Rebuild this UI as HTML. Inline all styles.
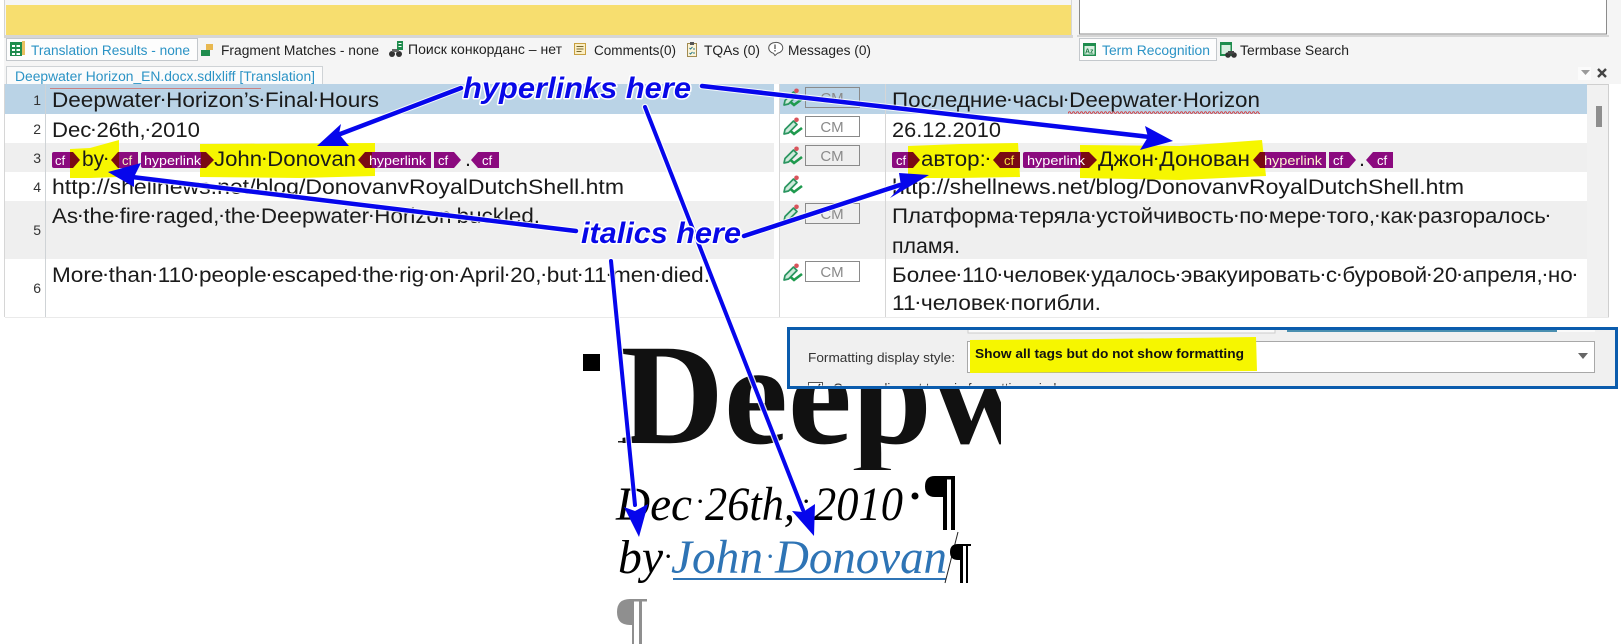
<!DOCTYPE html>
<html><head><meta charset="utf-8"><title>Deepwater Horizon</title>
<style>
html,body{margin:0;padding:0;background:#fff;width:1621px;height:644px;overflow:hidden}
svg{display:block}
text{font-family:"Liberation Sans",sans-serif;white-space:pre}
.seg{font-size:21.5px;fill:#1a1a1a}
.d{font-size:15px;baseline-shift:2.200px;font-weight:bold}
.num{font-size:14px;fill:#333;text-anchor:end}
.tab{font-size:13.5px;fill:#222}
.tabb{font-size:13.5px;fill:#2b93c5}
.tg{font-size:13px;fill:#fff}
.cm{font-size:15px;fill:#8a8a8a;text-anchor:middle}
.ann{font-size:30px;font-weight:bold;font-style:italic;fill:#0808e8;stroke:#fff;stroke-width:3px;paint-order:stroke;stroke-linejoin:round}
.ser{font-family:"Liberation Serif",serif}
.it{font-size:48px;font-style:italic;fill:#000}
.bl{fill:#2e74b5}
</style></head><body>
<svg width="1621" height="644" viewBox="0 0 1621 644" xmlns="http://www.w3.org/2000/svg">
<defs>
<pattern id="wv" width="4" height="3" patternUnits="userSpaceOnUse" x="0" y="111"><path d="M0 2.5L1 .8L2 .8L3 2.5L4 2.5" fill="none" stroke="#d83030" stroke-width=".8"/></pattern>
<g id="pen">
<path d="M2 12.500L10.500 4L14 7.500L5.500 16L1 17Z" fill="#cfeadb" stroke="#2a9560" stroke-width="1.700" stroke-linejoin="round"/>
<circle cx="13.500" cy="2.800" r="2.300" fill="#d9535b"/>
<path d="M7.500 14L11 17L19 11" fill="none" stroke="#1f9a4e" stroke-width="2.600"/>
</g>
<clipPath id="hc"><rect x="600" y="320" width="401" height="150"/></clipPath>
<clipPath id="pc"><rect x="790" y="330" width="825" height="55.5"/></clipPath>
</defs>

<!-- top area -->
<rect x="0" y="0" width="1621" height="84" fill="#f5f5f5"/>
<rect x="0" y="0" width="4" height="320" fill="#fff"/>
<rect x="4" y="0" width="1" height="36" fill="#d4d4d4"/>
<rect x="6" y="5" width="1065" height="30" fill="#f7de6f"/>
<rect x="4" y="35" width="1069" height="3" fill="#d6d6d6"/>
<rect x="1071" y="0" width="1" height="38" fill="#d6d6d6"/>
<rect x="1079.5" y="-2" width="527" height="36" fill="#fff" stroke="#8c8c8c"/>
<rect x="1077" y="35" width="532" height="2" fill="#d6d6d6"/>

<!-- left tabs -->
<rect x="6.500" y="38.500" width="191" height="22" fill="#fdfdfd" stroke="#c4c8cc"/>
<g><rect x="10" y="42" width="12" height="14" fill="#1e8c4d"/><rect x="12" y="45" width="8" height="2" fill="#fff"/><rect x="12" y="49" width="8" height="2" fill="#fff"/><rect x="12" y="53" width="8" height="2" fill="#fff"/><rect x="15" y="44" width="1.500" height="11" fill="#1e8c4d"/><rect x="22" y="41" width="3" height="14" fill="#e8c060"/></g>
<text class="tabb" x="31" y="55" textLength="159" lengthAdjust="spacingAndGlyphs">Translation Results - none</text>
<rect x="201" y="50" width="9" height="6" fill="#1e8c4d"/><rect x="206" y="44" width="7" height="6" fill="#e8b850"/>
<text class="tab" x="221" y="55" textLength="158" lengthAdjust="spacingAndGlyphs">Fragment Matches - none</text>
<g><circle cx="392" cy="54" r="3" fill="#333"/><circle cx="399" cy="54" r="3" fill="#333"/><rect x="392" y="49" width="7" height="3" fill="#666"/><rect x="397" y="41" width="6" height="9" fill="#1e8c4d"/><rect x="398.500" y="43" width="3" height="1" fill="#fff"/><rect x="398.500" y="46" width="3" height="1" fill="#fff"/></g>
<text class="tab" x="408" y="54" textLength="154" lengthAdjust="spacingAndGlyphs">Поиск конкорданс – нет</text>
<g fill="none"><rect x="574.500" y="43.500" width="11" height="11" fill="#fbeec4" stroke="#c8a040"/><path d="M576.500 46.500h7M576.500 49h7M576.500 51.500h5" stroke="#7a6a30"/></g>
<text class="tab" x="594" y="55" textLength="82" lengthAdjust="spacingAndGlyphs">Comments(0)</text>
<g fill="none"><rect x="687.500" y="43.500" width="9" height="13" fill="#fbf3d8" stroke="#a08a50"/><rect x="690" y="42" width="4" height="3" fill="#555"/><path d="M689.500 48l1 1 2-2M689.500 53l1 1 2-2M693 49h2M693 53h2" stroke="#2a7a8a"/></g>
<text class="tab" x="704" y="55" textLength="56" lengthAdjust="spacingAndGlyphs">TQAs (0)</text>
<g fill="none" stroke="#555"><path d="M775 42.500a6.500 5.500 0 0 1 2.500 10.800L775 55.500L773.500 53.300a6.500 5.500 0 0 1 1.500-10.800Z" fill="#fff"/><path d="M775 44.500v4.500M775 50v1.500" stroke-width="1.300"/></g>
<text class="tab" x="788" y="55" textLength="83" lengthAdjust="spacingAndGlyphs">Messages (0)</text>

<!-- right tabs -->
<rect x="1079.500" y="38.500" width="137" height="22" fill="#fdfdfd" stroke="#c4c8cc"/>
<rect x="1083" y="43" width="13" height="13" fill="#1e8c4d"/><rect x="1084.500" y="46" width="10" height="8.500" fill="#d8eee0"/><text x="1085" y="53.500" font-size="7" font-weight="bold" fill="#1e7c45">Az</text>
<text class="tabb" x="1102" y="55" textLength="108" lengthAdjust="spacingAndGlyphs">Term Recognition</text>
<rect x="1220" y="42" width="12" height="14" fill="#1e8c4d"/><rect x="1221.500" y="45" width="9" height="9" fill="#d8eee0"/><circle cx="1228" cy="55" r="2.800" fill="#333"/><circle cx="1234" cy="55" r="2.800" fill="#333"/><rect x="1228" y="51" width="6" height="3" fill="#444"/>
<text class="tab" x="1240" y="55" textLength="109" lengthAdjust="spacingAndGlyphs">Termbase Search</text>

<!-- doc tab -->
<rect x="6.500" y="66.500" width="316" height="20" fill="#fbfbfb" stroke="#cfd3d6"/>
<text class="tabb" x="15" y="81" textLength="300" lengthAdjust="spacingAndGlyphs">Deepwater Horizon_EN.docx.sdlxliff [Translation]</text>
<!-- menu -->
<rect x="1578" y="67" width="13" height="13" fill="#fbfbfb"/>
<path d="M1581 70h9l-4.500 5z" fill="#9a9a9a"/>
<path d="M1598 69l8 8M1606 69l-8 8" stroke="#444" stroke-width="2.400"/>

<!-- table -->
<rect x="5" y="84" width="1603" height="233" fill="#fff"/>
<rect x="5" y="84" width="769" height="30" fill="#bad3e6"/>
<rect x="779" y="84" width="808" height="30" fill="#bad3e6"/>
<rect x="5" y="143" width="769" height="29" fill="#efefef"/><rect x="779" y="143" width="808" height="29" fill="#efefef"/>
<rect x="5" y="201" width="769" height="58" fill="#efefef"/><rect x="779" y="201" width="808" height="58" fill="#efefef"/>
<rect x="45" y="84" width="1" height="233" fill="#cfd3d6"/>
<rect x="779" y="84" width="1" height="233" fill="#d6d6d6"/>
<rect x="885" y="84" width="1" height="233" fill="#d6d6d6"/>
<rect x="4" y="84" width="1" height="233" fill="#d6d6d6"/>
<rect x="1587" y="84" width="21" height="233" fill="#f1f1f1"/>
<rect x="1608" y="84" width="1" height="233" fill="#cfcfcf"/>
<rect x="1587" y="84" width="22" height="1" fill="#cfcfcf"/>
<rect x="1596" y="106" width="6" height="21" fill="#8e8e8e"/>
<rect x="5" y="317" width="1604" height="1" fill="#eaeaea"/>
<rect x="50" y="88" width="211" height="1" fill="#c98080"/>

<text class="num" x="41" y="105">1</text>
<text class="num" x="41" y="134">2</text>
<text class="num" x="41" y="163">3</text>
<text class="num" x="41" y="192">4</text>
<text class="num" x="41" y="235">5</text>
<text class="num" x="41" y="293">6</text>

<!-- yellow highlights -->
<path d="M70 149L90 148L119 140L119 177L90 178L70 178Z" fill="#f6f600"/>
<path d="M200 144L375 143L375 176L300 178L200 177Z" fill="#f6f600"/>
<path d="M908 146L960 144L1018 143L1020 177L960 178L908 178Z" fill="#f6f600"/>
<path d="M1080 145L1180 146L1262 140L1266 176L1180 180L1080 178Z" fill="#f6f600"/>

<!-- source text -->
<text class="seg" x="52" y="107" textLength="327" lengthAdjust="spacingAndGlyphs">Deepwater<tspan class="d">·</tspan>Horizon’s<tspan class="d">·</tspan>Final<tspan class="d">·</tspan>Hours</text>
<text class="seg" x="52" y="137" textLength="148" lengthAdjust="spacingAndGlyphs">Dec<tspan class="d">·</tspan>26th,<tspan class="d">·</tspan>2010</text>
<text class="seg" x="82" y="166" textLength="27" lengthAdjust="spacingAndGlyphs">by<tspan class="d">·</tspan></text>
<text class="seg" x="214" y="166" textLength="142" lengthAdjust="spacingAndGlyphs">John<tspan class="d">·</tspan>Donovan</text>
<text class="seg" x="465" y="166">.</text>
<text class="seg" x="52" y="194" textLength="572" lengthAdjust="spacingAndGlyphs">http://shellnews.net/blog/DonovanvRoyalDutchShell.htm</text>
<text class="seg" x="52" y="223" textLength="488" lengthAdjust="spacingAndGlyphs">As<tspan class="d">·</tspan>the<tspan class="d">·</tspan>fire<tspan class="d">·</tspan>raged,<tspan class="d">·</tspan>the<tspan class="d">·</tspan>Deepwater<tspan class="d">·</tspan>Horizon<tspan class="d">·</tspan>buckled.</text>
<text class="seg" x="52" y="282" textLength="658" lengthAdjust="spacingAndGlyphs">More<tspan class="d">·</tspan>than<tspan class="d">·</tspan>110<tspan class="d">·</tspan>people<tspan class="d">·</tspan>escaped<tspan class="d">·</tspan>the<tspan class="d">·</tspan>rig<tspan class="d">·</tspan>on<tspan class="d">·</tspan>April<tspan class="d">·</tspan>20,<tspan class="d">·</tspan>but<tspan class="d">·</tspan>11<tspan class="d">·</tspan>men<tspan class="d">·</tspan>died.</text>

<!-- source tags -->
<path d="M54 152H70V168H54Q52 168 52 166V154Q52 152 54 152Z" fill="#8b0a7f"/><path d="M70 152H73L80 160L73 168H70Z" fill="#7a0a14"/><text class="tg" x="55" y="165">cf</text>
<path d="M111 160L118 152H121V168H118Z" fill="#7a0a14"/><path d="M119 152H138V168H119Z" fill="#8b0a7f"/><text class="tg" x="122" y="165" style="fill:#f4f0c0">cf</text>
<path d="M143 152H203V168H143Q141 168 141 166V154Q141 152 143 152Z" fill="#8b0a7f"/><path d="M201 152H206L214 160L206 168H201Z" fill="#7a0a14"/><text class="tg" x="144" y="165" textLength="57" lengthAdjust="spacingAndGlyphs">hyperlink</text>
<path d="M358 160L365 152H372V168H365Z" fill="#7a0a14"/><path d="M372 152H431V168H372Z" fill="#8b0a7f"/><text class="tg" x="369" y="165" textLength="57" lengthAdjust="spacingAndGlyphs">hyperlink</text>
<path d="M434 152H454L461 160L454 168H434Z" fill="#8b0a7f"/><text class="tg" x="438" y="165">cf</text>
<path d="M471 160L478 152H499V168H478Z" fill="#8b0a7f"/><text class="tg" x="482" y="165">cf</text>

<!-- status column -->
<use href="#pen" x="783" y="88"/><use href="#pen" x="783" y="117"/><use href="#pen" x="783" y="146"/><use href="#pen" x="783" y="175"/><use href="#pen" x="783" y="204"/><use href="#pen" x="783" y="263"/>
<rect x="805.500" y="87.500" width="54" height="20" fill="#bad3e6" stroke="#8a8a8a"/><text class="cm" x="832" y="103">CM</text>
<rect x="805.500" y="116.500" width="54" height="20" fill="#fff" stroke="#8a8a8a"/><text class="cm" x="832" y="132">CM</text>
<rect x="805.500" y="145.500" width="54" height="20" fill="#efefef" stroke="#8a8a8a"/><text class="cm" x="832" y="161">CM</text>
<rect x="805.500" y="203.500" width="54" height="20" fill="#efefef" stroke="#8a8a8a"/><text class="cm" x="832" y="219">CM</text>
<rect x="805.500" y="261.500" width="54" height="20" fill="#fff" stroke="#8a8a8a"/><text class="cm" x="832" y="277">CM</text>

<!-- target text -->
<rect x="1068" y="111" width="192" height="3" fill="url(#wv)"/>
<text class="seg" x="892" y="107" textLength="368" lengthAdjust="spacingAndGlyphs">Последние<tspan class="d">·</tspan>часы<tspan class="d">·</tspan>Deepwater<tspan class="d">·</tspan>Horizon</text>
<text class="seg" x="892" y="137" textLength="109" lengthAdjust="spacingAndGlyphs">26.12.2010</text>
<text class="seg" x="921" y="166" textLength="70" lengthAdjust="spacingAndGlyphs">автор:<tspan class="d">·</tspan></text>
<text class="seg" x="1098" y="166" textLength="152" lengthAdjust="spacingAndGlyphs">Джон<tspan class="d">·</tspan>Донован</text>
<text class="seg" x="1359" y="166">.</text>
<text class="seg" x="892" y="194" textLength="572" lengthAdjust="spacingAndGlyphs">http://shellnews.net/blog/DonovanvRoyalDutchShell.htm</text>
<text class="seg" x="892" y="223" textLength="659" lengthAdjust="spacingAndGlyphs">Платформа<tspan class="d">·</tspan>теряла<tspan class="d">·</tspan>устойчивость<tspan class="d">·</tspan>по<tspan class="d">·</tspan>мере<tspan class="d">·</tspan>того,<tspan class="d">·</tspan>как<tspan class="d">·</tspan>разгоралось<tspan class="d">·</tspan></text>
<text class="seg" x="892" y="253" textLength="68" lengthAdjust="spacingAndGlyphs">пламя.</text>
<text class="seg" x="892" y="282" textLength="686" lengthAdjust="spacingAndGlyphs">Более<tspan class="d">·</tspan>110<tspan class="d">·</tspan>человек<tspan class="d">·</tspan>удалось<tspan class="d">·</tspan>эвакуировать<tspan class="d">·</tspan>с<tspan class="d">·</tspan>буровой<tspan class="d">·</tspan>20<tspan class="d">·</tspan>апреля,<tspan class="d">·</tspan>но<tspan class="d">·</tspan></text>
<text class="seg" x="892" y="310" textLength="209" lengthAdjust="spacingAndGlyphs">11<tspan class="d">·</tspan>человек<tspan class="d">·</tspan>погибли.</text>

<!-- target tags -->
<path d="M894 152H908V168H894Q892 168 892 166V154Q892 152 894 152Z" fill="#8b0a7f"/><path d="M908 152H913L920 160L913 168H908Z" fill="#7a0a14"/><text class="tg" x="896" y="165">cf</text>
<path d="M993 160L1000 152H1020V168H1000Z" fill="#7a0a14"/><text class="tg" x="1004" y="165" style="fill:#f5e040">cf</text>
<path d="M1025 152H1082V168H1025Q1023 168 1023 166V154Q1023 152 1025 152Z" fill="#8b0a7f"/><path d="M1081 152H1089L1097 160L1089 168H1081Z" fill="#7a0a14"/><text class="tg" x="1027" y="165" textLength="58" lengthAdjust="spacingAndGlyphs">hyperlink</text>
<path d="M1253 160L1260 152H1266V168H1260Z" fill="#7a0a14"/><path d="M1265 152H1326V168H1265Z" fill="#8b0a7f"/><text class="tg" x="1264" y="165" textLength="58" lengthAdjust="spacingAndGlyphs" style="fill:#fdf6d0">hyperlink</text>
<path d="M1329 152H1349L1356 160L1349 168H1329Z" fill="#8b0a7f"/><text class="tg" x="1333" y="165">cf</text>
<path d="M1366 160L1373 152H1393V168H1373Z" fill="#8b0a7f"/><text class="tg" x="1377" y="165">cf</text>

<!-- document preview -->
<rect x="583" y="354" width="17" height="17" fill="#000"/>
<rect x="618" y="441" width="8" height="1.500" fill="#222"/>
<g clip-path="url(#hc)"><text class="ser" x="620" y="443" font-size="144" font-weight="bold" fill="#111">Deepw</text></g>
<text class="ser it" x="616" y="520" textLength="76" lengthAdjust="spacingAndGlyphs">Dec</text>
<text class="ser it" x="696" y="511" style="font-size:30px">·</text>
<text class="ser it" x="705" y="520" textLength="90" lengthAdjust="spacingAndGlyphs">26th,</text>
<text class="ser it" x="802" y="511" style="font-size:30px">·</text>
<text class="ser it" x="814" y="520" textLength="89" lengthAdjust="spacingAndGlyphs">2010</text>
<circle cx="915" cy="496" r="3.500" fill="#000"/>
<path d="M935 476H955V530H951V479.500H947V530H943V497H935Q925 497 925 486.500Q925 476 935 476Z" fill="#000"/>
<text class="ser it" x="618" y="573" textLength="45" lengthAdjust="spacingAndGlyphs">by</text>
<text class="ser it" x="664" y="566" style="font-size:30px">·</text>
<text class="ser it bl" x="671" y="573" textLength="92" lengthAdjust="spacingAndGlyphs" style="fill:#2e74b5">John</text>
<text class="ser it" x="766" y="566" style="font-size:30px;fill:#2e74b5">·</text>
<text class="ser it bl" x="775" y="573" textLength="172" lengthAdjust="spacingAndGlyphs" style="fill:#2e74b5">Donovan</text>
<rect x="673" y="578" width="273" height="2" fill="#2e74b5"/>
<path d="M958 532L945 583" stroke="#222" stroke-width="1"/>
<path d="M958 544H971V546H968V583H966V546H963V583H960V560H958Q950 560 950 552Q950 544 958 544Z" fill="#000"/>
<path d="M630 599H647V601.500H642V644H639V601.500H634V644H632V625H630Q617 625 617 612Q617 599 630 599Z" fill="#8f8f8f"/>

<!-- settings panel -->
<rect x="788.500" y="328.500" width="828" height="59" fill="#f0f0f0" stroke="#0b5cad" stroke-width="3"/>
<g clip-path="url(#pc)">
<rect x="968" y="328" width="307" height="5" fill="#fafafa" stroke="#ccc"/>
<rect x="1287" y="328" width="270" height="4" fill="#4a8fb0"/>
<rect x="1557" y="328" width="38" height="4" fill="#fafafa"/>
<text x="808" y="362" font-size="13" fill="#333" textLength="147" lengthAdjust="spacingAndGlyphs">Formatting display style:</text>
<rect x="967.500" y="341.500" width="627" height="31" fill="#fff" stroke="#a8a8a8"/>
<path d="M970 340L1100 339L1256 337L1257 371L1100 372L970 373Z" fill="#f6f600"/>
<text x="975" y="358" font-size="13" font-weight="bold" fill="#111" textLength="269" lengthAdjust="spacingAndGlyphs">Show all tags but do not show formatting</text>
<path d="M1578 353h10l-5 6z" fill="#666"/>
<rect x="808.500" y="382.500" width="14" height="12" fill="#fff" stroke="#555"/>
<path d="M812 388l3 3 5-7" fill="none" stroke="#222" stroke-width="1.500"/>
<text x="833" y="393" font-size="14" fill="#333" textLength="240" lengthAdjust="spacingAndGlyphs">Group adjacent tags in formatting window</text>
</g>

<!-- arrows -->
<g fill="none" stroke="#fff" stroke-width="6.500" stroke-linecap="round" opacity=".85">
<path d="M461 88L335 136"/><path d="M702 86L1150 137"/><path d="M576 231L132 177"/><path d="M744 236L900 185"/><path d="M611 261L635 505"/><path d="M645 107L803 510"/>
</g>
<g fill="none" stroke="#0606ec" stroke-width="4.500" stroke-linecap="round">
<path d="M461 88L335 136"/><path d="M702 86L1150 137"/><path d="M576 231L132 177"/><path d="M744 236L900 185"/>
<path d="M611 261L635 505" stroke-width="4"/><path d="M645 107L803 510" stroke-width="4"/>
</g>
<g fill="#0606ec">
<path d="M317 146L341 124L339 134L349 146Z"/>
<path d="M1173 141L1145 126L1148 137L1140 150Z"/>
<path d="M108 172L141 163L134 177L134 187Z"/>
<path d="M929 175L899 173L901 186L890 198Z"/>
<path d="M639 537L624 507L635 511L648 504Z"/>
<path d="M814 536L792 511L803 512L815 504Z"/>
</g>
<text class="ann" x="463" y="98" textLength="228" lengthAdjust="spacingAndGlyphs">hyperlinks here</text>
<text class="ann" x="581" y="243" textLength="160" lengthAdjust="spacingAndGlyphs">italics here</text>
</svg>
</body></html>
